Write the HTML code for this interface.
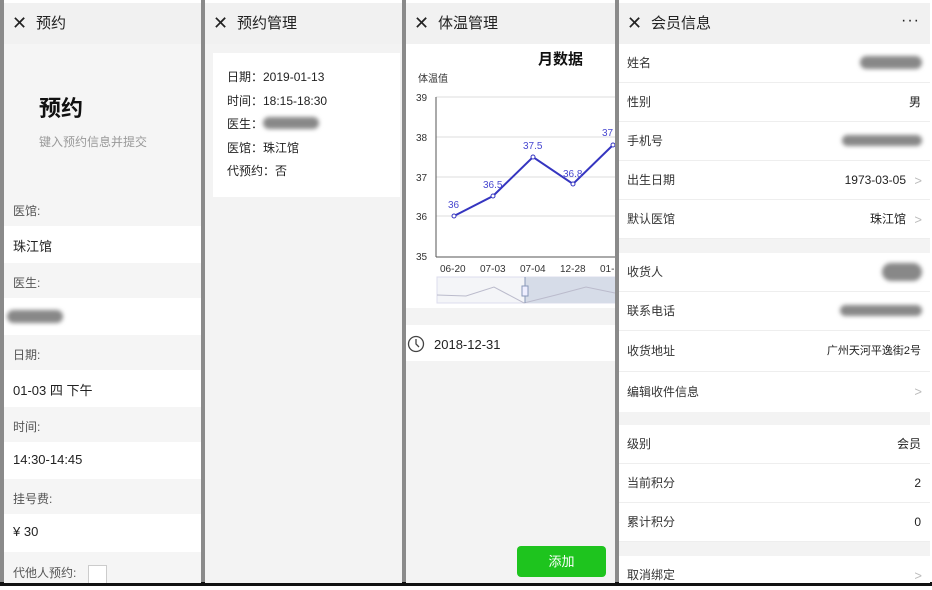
<!DOCTYPE html>
<html><head><meta charset="utf-8"><style>
*{margin:0;padding:0;box-sizing:border-box}
body{width:932px;height:590px;background:#fff;position:relative;overflow:hidden;font-family:"Liberation Sans","Noto Sans CJK SC",sans-serif;color:#222}
.a{position:absolute}
.bar{position:absolute;top:0;height:583px;background:#8a8a8a}
.p{position:absolute;top:3px;height:580px;background:#f3f3f3;overflow:hidden}
.hd{position:absolute;left:0;right:0;top:0;height:41px;background:#f1f1f1;font-size:15px;line-height:41px;color:#222}
.hd .x{position:absolute;left:8px;top:0;font-size:18px;font-weight:300}
.hd .t{position:absolute;left:32px}
.lbl{position:absolute;left:9px;font-size:12px;color:#555}
.w{position:absolute;left:0;right:0;background:#fff}
.wt{position:absolute;left:9px;font-size:13px;color:#222}
.blur{position:absolute;background:#888;border-radius:10px;filter:blur(2px)}
.row{position:absolute;left:0;right:0;height:39px;background:#fff;border-bottom:1px solid #eee;font-size:12px;line-height:39px}
.row .l{position:absolute;left:8px;color:#333}
.row .r{position:absolute;right:9px;color:#222}
.row .r.c{right:24px}
.chev{position:absolute;right:8px;top:0;color:#bbb;font-size:13px}
</style></head><body>
<div class="bar" style="left:0;width:4px"></div>
<div class="bar" style="left:201px;width:4px"></div>
<div class="bar" style="left:402px;width:4px"></div>
<div class="bar" style="left:615px;width:4px"></div>
<div class="a" style="left:0;top:582px;width:932px;height:4px;background:#111"></div>

<!-- Panel 1 -->
<div class="p" style="left:4px;width:197px;background:#f5f5f5">
 <div class="hd"><span class="x">✕</span><span class="t">预约</span></div>
 <div class="a" style="left:35px;top:88px;font-size:22px;font-weight:bold;color:#111">预约</div>
 <div class="a" style="left:35px;top:130px;font-size:12px;color:#999">键入预约信息并提交</div>
 <div class="lbl" style="top:199px">医馆:</div>
 <div class="w" style="top:223px;height:37px"><span class="wt" style="top:10px">珠江馆</span></div>
 <div class="lbl" style="top:271px">医生:</div>
 <div class="w" style="top:295px;height:37px"><div class="blur" style="left:3px;top:12px;width:56px;height:13px"></div></div>
 <div class="lbl" style="top:343px">日期:</div>
 <div class="w" style="top:367px;height:37px"><span class="wt" style="top:10px">01-03 四 下午</span></div>
 <div class="lbl" style="top:415px">时间:</div>
 <div class="w" style="top:439px;height:37px"><span class="wt" style="top:10px">14:30-14:45</span></div>
 <div class="lbl" style="top:487px">挂号费:</div>
 <div class="w" style="top:511px;height:38px"><span class="wt" style="top:10px">¥ 30</span></div>
 <div class="lbl" style="top:561px">代他人预约:</div>
 <div class="a" style="left:84px;top:562px;width:19px;height:19px;border:1px solid #ccc;background:#fff"></div>
</div>

<!-- Panel 2 -->
<div class="p" style="left:205px;width:197px">
 <div class="hd"><span class="x">✕</span><span class="t">预约管理</span></div>
 <div class="w" style="left:8px;right:2px;top:50px;height:144px;font-size:12px;line-height:23.5px;padding:13px 0 0 14px;color:#222">
  日期：2019-01-13<br>时间：18:15-18:30<br>医生：<br>医馆：珠江馆<br>代预约：否
  <div class="blur" style="left:50px;top:64px;width:56px;height:12px"></div>
 </div>
</div>

<!-- Panel 3 -->
<div class="p" style="left:406px;width:209px">
 <div class="hd"><span class="x">✕</span><span class="t">体温管理</span></div>
 <div class="w" style="top:41px;height:264px"></div>
 <div class="w" style="top:322px;height:36px"></div>
 <div class="a" style="left:0;top:0">
 <svg width="209" height="360" style="position:absolute;left:0;top:0">
  <text x="132" y="61" font-size="15" font-weight="bold" fill="#111" font-family="Liberation Sans,Noto Sans CJK SC,sans-serif">月数据</text>
  <text x="12" y="79" font-size="10" fill="#333" font-family="Liberation Sans,Noto Sans CJK SC,sans-serif">体温值</text>
  <g stroke="#ddd" stroke-width="1">
   <line x1="30" y1="94" x2="209" y2="94"/><line x1="30" y1="134" x2="209" y2="134"/><line x1="30" y1="174" x2="209" y2="174"/><line x1="30" y1="213" x2="209" y2="213"/>
  </g>
  <line x1="30" y1="94" x2="30" y2="254" stroke="#555"/>
  <line x1="30" y1="254" x2="209" y2="254" stroke="#555"/>
  <g font-size="10" fill="#333" font-family="Liberation Sans,sans-serif">
   <text x="10" y="98">39</text><text x="10" y="138">38</text><text x="10" y="178">37</text><text x="10" y="217">36</text><text x="10" y="257">35</text>
   <text x="34" y="269">06-20</text><text x="74" y="269">07-03</text><text x="114" y="269">07-04</text><text x="154" y="269">12-28</text><text x="194" y="269">01-</text>
  </g>
  <polyline points="48,213 87,193 127,154 167,181 207,142" fill="none" stroke="#3535c0" stroke-width="2"/>
  <g fill="#fff" stroke="#3535c0"><circle cx="48" cy="213" r="2"/><circle cx="87" cy="193" r="2"/><circle cx="127" cy="154" r="2"/><circle cx="167" cy="181" r="2"/><circle cx="207" cy="142" r="2"/></g>
  <g font-size="10" fill="#4848d0" font-family="Liberation Sans,sans-serif">
   <text x="42" y="205">36</text><text x="77" y="185">36.5</text><text x="117" y="146">37.5</text><text x="157" y="174">36.8</text><text x="196" y="133">37</text>
  </g>
  <rect x="31" y="274" width="178" height="26" fill="#f4f5f8" stroke="#dde"/>
  <rect x="119" y="274" width="90" height="26" fill="#d6dce8"/>
  <polyline points="31,292 60,293 88,284 118,300 150,292 180,284 209,290" fill="none" stroke="#bbc" />
  <line x1="119" y1="274" x2="119" y2="300" stroke="#8898b8"/>
  <rect x="116" y="283" width="6" height="10" fill="#eef" stroke="#8898b8"/>
  <circle cx="10" cy="341" r="7.5" fill="none" stroke="#444" stroke-width="1.3"/>
  <path d="M10 336 V341 L13 344" fill="none" stroke="#444" stroke-width="1.3"/>
  <text x="28" y="346" font-size="13" fill="#222" font-family="Liberation Sans,sans-serif">2018-12-31</text>
 </svg></div>
 <div class="a" style="left:111px;top:543px;width:89px;height:31px;background:#1ec41e;border-radius:4px;color:#fff;font-size:13px;line-height:31px;text-align:center">添加</div>
</div>

<!-- Panel 4 -->
<div class="p" style="left:619px;width:311px">
 <div class="hd"><span class="x">✕</span><span class="t">会员信息</span><span class="a" style="right:10px;top:-3px;font-size:16px;letter-spacing:1px">···</span></div>
 <div class="row" style="top:41px"><span class="l">姓名</span><div class="blur" style="right:8px;top:12px;width:62px;height:13px"></div></div>
 <div class="row" style="top:80px"><span class="l">性别</span><span class="r">男</span></div>
 <div class="row" style="top:119px"><span class="l">手机号</span><div class="blur" style="right:8px;top:13px;width:80px;height:11px"></div></div>
 <div class="row" style="top:158px"><span class="l">出生日期</span><span class="r c">1973-03-05</span><span class="chev">&gt;</span></div>
 <div class="row" style="top:197px"><span class="l">默认医馆</span><span class="r c">珠江馆</span><span class="chev">&gt;</span></div>
 <div class="row" style="top:250px"><span class="l">收货人</span><div class="blur" style="right:8px;top:10px;width:40px;height:18px"></div></div>
 <div class="row" style="top:289px"><span class="l">联系电话</span><div class="blur" style="right:8px;top:13px;width:82px;height:11px"></div></div>
 <div class="row" style="top:328px;height:41px;line-height:41px"><span class="l">收货地址</span><span class="r" style="font-size:11px">广州天河平逸街2号</span></div>
 <div class="row" style="top:369px;height:40px;line-height:40px;border:0"><span class="l">编辑收件信息</span><span class="chev">&gt;</span></div>
 <div class="row" style="top:422px"><span class="l">级别</span><span class="r">会员</span></div>
 <div class="row" style="top:461px"><span class="l">当前积分</span><span class="r">2</span></div>
 <div class="row" style="top:500px"><span class="l">累计积分</span><span class="r">0</span></div>
 <div class="row" style="top:553px"><span class="l">取消绑定</span><span class="chev">&gt;</span></div>
</div>
</body></html>
